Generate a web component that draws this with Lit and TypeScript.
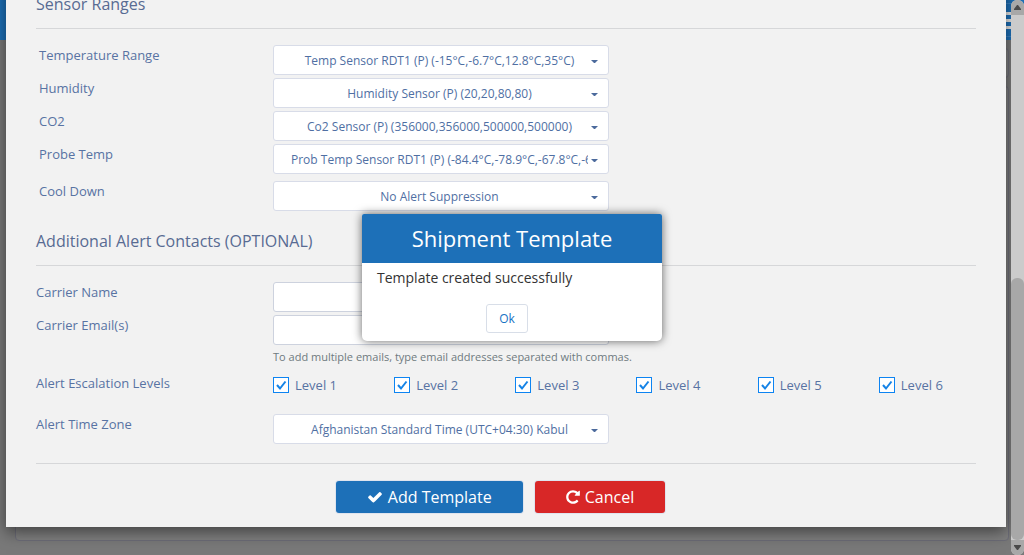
import { LitElement, html, css, svg } from "lit";
import { customElement, property } from "lit/decorators.js";

const CHECK = svg`<path d="M1671 566q0 40-28 68l-724 724-136 136q-28 28-68 28t-68-28l-136-136-362-362q-28-28-28-68t28-68l136-136q28-28 68-28t68 28l294 295 656-657q28-28 68-28t68 28l136 136q28 28 28 68z"/>`;
const REPEAT = svg`<path d="M1664 256v448q0 26-19 45t-45 19h-448q-42 0-59-40-17-39 14-69l138-138q-148-137-349-137-104 0-198.500 40.500t-163.500 109.500-109.500 163.500-40.500 198.500 40.500 198.500 109.500 163.500 163.500 109.500 198.500 40.500q119 0 225-52t179-147q7-10 23-12 15 0 25 9l137 138q9 8 9.500 20.500t-7.500 22.500q-109 132-264 204.500t-327 72.500q-156 0-298-61t-245-164-164-245-61-298 61-298 164-245 245-164 298-61q147 0 284.500 55.500t244.500 156.500l130-129q29-31 70-14 39 17 39 59z"/>`;

@customElement("select-field")
class SelectField extends LitElement {
  @property() label = "";
  @property() value = "";

  static styles = css`
    :host { display: block; }
    .row { display: grid; grid-template-columns: var(--label-col, 237px) minmax(0, 336px); align-items: start; }
    label { font-size: 13px; line-height: 20px; color: #5873a3; }
    .box { display: grid; grid-template-columns: 1fr; align-items: center; }
    .box > * { grid-area: 1 / 1; }
    select {
      appearance: none; width: 100%; height: 30px; box-sizing: border-box; margin: 0;
      padding: 0 20px 0 17px; border: 1px solid #d8dce8; border-radius: 3px;
      background: #fff; color: #4f6fa3; font: 12px "Open Sans", sans-serif;
      text-align: center; text-align-last: center;
    }
    svg { justify-self: end; margin-right: 11px; margin-top: 3px; pointer-events: none; }
  `;

  render() {
    return html`
      <div class="row">
        <label for="field">${this.label}</label>
        <div class="box">
          <select id="field"><option>${this.value}</option></select>
          <svg width="7" height="3" viewBox="0 0 7 3" fill="#4c6a9c" aria-hidden="true">
            <path d="M0 0h7L4 3H3z" />
          </svg>
        </div>
      </div>
    `;
  }
}

@customElement("app-root")
class AppRoot extends LitElement {
  private ranges = [
    ["Temperature Range", "Temp Sensor RDT1 (P) (-15°C,-6.7°C,12.8°C,35°C)"],
    ["Humidity", "Humidity Sensor (P) (20,20,80,80)"],
    ["CO2", "Co2 Sensor (P) (356000,356000,500000,500000)"],
    ["Probe Temp", "Prob Temp Sensor RDT1 (P) (-84.4°C,-78.9°C,-67.8°C,-62.2°C)"],
  ];
  private levels = [1, 2, 3, 4, 5, 6];

  static styles = css`
    :host {
      display: block; position: relative; height: 100vh; overflow: hidden;
      font-family: "Open Sans", sans-serif; color: #5873a3; background: #797979;
    }
    button, input { font-family: inherit; }

    .page { display: flex; flex-direction: column; height: 100%; padding-right: 13px; box-sizing: border-box; background: #797979; }
    .topbar { height: 40px; margin-right: -13px; padding-right: 13px; background: #1d70b8; display: flex; align-items: center; justify-content: flex-end; }
    .menu {
      display: flex; flex-direction: column; justify-content: center; gap: 4px; width: 40px; height: 34px;
      padding: 0; border: 1px solid #3a83c4; border-right: 0; background: #1d70b8;
    }
    .menu span { height: 3px; background: #e4e4e4; }
    .panel { margin: 8px 2px 0 15px; border: 1px solid #6d6d78; border-radius: 4px; background: #808080; }
    .panel.small { height: 28px; }
    .panel.tall { flex: 1; margin-bottom: 14px; }

    .overlay { position: absolute; inset: 0; display: flex; align-items: flex-end; padding: 0 18px 28px 6px; }
    .sheet {
      flex: 1; min-width: 0; padding: 24px 30px 14px; background: #f2f2f2;
      box-shadow: 0 5px 15px rgba(0, 0, 0, 0.5);
    }
    h2 { margin: 0 0 12px; font-size: 16px; line-height: 24px; font-weight: 400; color: #586b93; }
    hr { margin: 0; border: 0; height: 1px; background: #d6d7d9; }
    .fields { display: flex; flex-direction: column; gap: 3px; padding: 16px 0 19px; }
    .ranges { --label-col: 234px; padding: 16px 0 18px 3px; }
    .cool { margin-top: 4px; }
    .row { display: grid; grid-template-columns: 237px minmax(0, 1fr); align-items: start; }
    .row label, .caption { font-size: 13px; line-height: 20px; }
    .text {
      width: 100%; max-width: 336px; height: 30px; box-sizing: border-box; padding: 0 10px;
      border: 1px solid #cdd2de; border-radius: 3px; background: #fff; font-size: 12px;
    }
    .hint { margin: 4px 0 0; font-size: 11px; line-height: 16px; color: #6f7a80; }
    .escalation { margin-top: 5px; }
    .levels { display: grid; grid-template-columns: repeat(6, 1fr); gap: 24px; }
    .level { display: grid; grid-template-columns: 16px auto; column-gap: 6px; align-items: center; height: 24px; }
    .level input {
      grid-area: 1 / 1; appearance: none; width: 16px; height: 16px; box-sizing: border-box;
      margin: 0; border: 1px solid #0d84f2; background: #fff;
    }
    .level svg { grid-area: 1 / 1; pointer-events: none; }
    .level input:not(:checked) + svg { visibility: hidden; }
    .zone { margin-top: 14px; }
    .actions { display: flex; justify-content: center; gap: 12px; padding: 17px 11px 0 0; }
    .action {
      display: flex; align-items: center; gap: 5px; height: 32px; padding: 0 31px; box-sizing: border-box;
      border: 0; border-radius: 3px; color: #fff; font-size: 16px; line-height: 22px;
      box-shadow: 0 0 0 1px #dfe4ee;
    }
    .action svg { fill: currentColor; }
    .add { background-color: #1d70b8; }
    .cancel { background-color: #d82727; }

    .popup { position: absolute; inset: 0; display: grid; place-items: center; }
    .dialog {
      width: 300px; border-radius: 2px 2px 5px 5px; overflow: hidden; background: #fff;
      box-shadow: 0 0 10px rgba(0, 0, 0, 0.6);
    }
    .dialog h1 { margin: 0; padding: 9px 0 10px; background: #1d70b8; color: #fff; font-size: 22px; line-height: 30px; font-weight: 400; text-align: center; }
    .dialog p { margin: 0; padding: 5px 15px 16px; color: #333; font-size: 14px; line-height: 20px; }
    .confirm { display: flex; justify-content: center; padding: 0 10px 8px 0; }
    .confirm button {
      width: 42px; height: 29px; padding: 0; border: 1px solid #d8dee8; border-radius: 3px;
      background: #fff; color: #1673c4; font-size: 12px;
    }

    .scroll { position: absolute; inset: 0 0 0 auto; width: 13px; display: flex; flex-direction: column; border-radius: 6px; overflow: hidden; background: #cbcbcb; }
    .cap { height: 15px; background: #a8a8a8; display: grid; place-items: center; }
    .track { flex: 1; display: flex; flex-direction: column; justify-content: flex-end; }
    .thumb { height: 50%; border-radius: 6px; background: #a8a8a8; }
  `;

  render() {
    return html`
      <div class="page">
        <header class="topbar">
          <button class="menu" aria-label="Menu"><span></span><span></span><span></span></button>
        </header>
        <div class="panel small"></div>
        <div class="panel tall"></div>
      </div>

      <div class="overlay">
        <main class="sheet">
          <h2>Sensor Ranges</h2>
          <hr />
          <div class="fields ranges">
            ${this.ranges.map(([l, v]) => html`<select-field .label=${l} .value=${v}></select-field>`)}
            <select-field class="cool" .label=${"Cool Down"} .value=${"No Alert Suppression"}></select-field>
          </div>

          <h2>Additional Alert Contacts (OPTIONAL)</h2>
          <hr />
          <div class="fields">
            <div class="row">
              <label for="carrier">Carrier Name</label>
              <input class="text" id="carrier" type="text" />
            </div>
            <div class="row">
              <label for="emails">Carrier Email(s)</label>
              <div>
                <input class="text" id="emails" type="text" />
                <p class="hint">To add multiple emails, type email addresses separated with commas.</p>
              </div>
            </div>
            <div class="row escalation" role="group" aria-labelledby="levels">
              <span class="caption" id="levels">Alert Escalation Levels</span>
              <div class="levels">
                ${this.levels.map((n) => html`
                  <label class="level">
                    <input type="checkbox" checked />
                    <svg width="16" height="16" viewBox="0 0 16 16" fill="none" stroke="#1583e6" stroke-width="2" aria-hidden="true"><path d="M4 8l3 3.500L12.500 4.500" /></svg>
                    <span>Level ${n}</span>
                  </label>`)}
              </div>
            </div>
            <select-field class="zone" .label=${"Alert Time Zone"} .value=${"Afghanistan Standard Time (UTC+04:30) Kabul"}></select-field>
          </div>
          <hr />
          <div class="actions">
            <button class="action add"><svg width="16" height="16" viewBox="0 0 1792 1792" aria-hidden="true">${CHECK}</svg>Add Template</button>
            <button class="action cancel"><svg width="14" height="16" viewBox="128 0 1536 1792" aria-hidden="true">${REPEAT}</svg>Cancel</button>
          </div>
        </main>
      </div>

      <div class="scroll" aria-hidden="true">
        <div class="cap"><svg width="7" height="5" viewBox="0 0 7 5" fill="#4a4a4a"><path d="M3 0h1l3 4v1H0V4z" /></svg></div>
        <div class="track"><div class="thumb"></div></div>
        <div class="cap"><svg width="7" height="5" viewBox="0 0 7 5" fill="#4a4a4a"><path d="M3 5h1l3-4V0H0v1z" /></svg></div>
      </div>

      <div class="popup">
        <section class="dialog" role="dialog" aria-labelledby="title">
          <h1 id="title">Shipment Template</h1>
          <p>Template created successfully</p>
          <div class="confirm"><button>Ok</button></div>
        </section>
      </div>
    `;
  }
}
